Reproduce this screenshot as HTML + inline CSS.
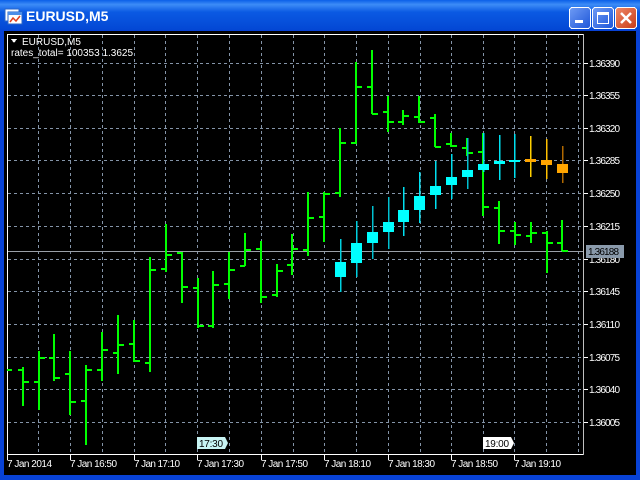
<!DOCTYPE html>
<html><head><meta charset="utf-8"><style>
html,body{margin:0;padding:0;width:640px;height:480px;overflow:hidden;background:#0842d6}
svg text{font-family:"Liberation Sans",sans-serif}
</style></head><body>
<svg width="640" height="480" xmlns="http://www.w3.org/2000/svg" shape-rendering="crispEdges">
<defs>
<linearGradient id="tb" x1="0" y1="0" x2="0" y2="1">
<stop offset="0" stop-color="#0a5fe8"/><stop offset="0.15" stop-color="#3d8cf7"/><stop offset="0.4" stop-color="#0b5ae3"/><stop offset="1" stop-color="#0347d4"/></linearGradient>
<linearGradient id="bb" x1="0" y1="0" x2="1" y2="1"><stop offset="0" stop-color="#6f9cf5"/><stop offset="1" stop-color="#1d55d8"/></linearGradient>
<linearGradient id="rb" x1="0" y1="0" x2="1" y2="1"><stop offset="0" stop-color="#f08a6a"/><stop offset="1" stop-color="#c83b16"/></linearGradient>
</defs>
<rect x="0" y="0" width="640" height="480" fill="#0842d6"/>
<rect x="0" y="0" width="640" height="30" fill="url(#tb)"/>
<rect x="5" y="9" width="14" height="12" fill="#fff" stroke="#2a66c8"/>
<rect x="8" y="12" width="14" height="12" fill="#fff" stroke="#2a66c8"/>
<rect x="8" y="12" width="14" height="3" fill="#4c8ee8"/>
<polyline points="10,22 13,18 16,21 20,16" fill="none" stroke="#e04020" stroke-width="1.5" shape-rendering="auto"/>
<text x="26" y="21" font-size="14" font-weight="bold" fill="#fff">EURUSD,M5</text>
<rect x="569.5" y="7.5" width="21" height="21" rx="3" fill="url(#bb)" stroke="#fff"/>
<rect x="575" y="20" width="8" height="3" fill="#fff"/>
<rect x="592.5" y="7.5" width="21" height="21" rx="3" fill="url(#bb)" stroke="#fff"/>
<rect x="597.5" y="12.5" width="11" height="11" fill="none" stroke="#fff"/><rect x="597" y="12" width="12" height="3" fill="#fff"/>
<rect x="615.5" y="7.5" width="21" height="21" rx="3" fill="url(#rb)" stroke="#fff"/>
<path d="M621 13 L631 23 M631 13 L621 23" stroke="#fff" stroke-width="2.5" shape-rendering="auto"/>
<rect x="4" y="31" width="632" height="444" fill="#000"/>
<g stroke="#8494a8" stroke-width="1" stroke-dasharray="3,3">
<line x1="8" x2="582" y1="63.5" y2="63.5"/><line x1="8" x2="582" y1="95.5" y2="95.5"/>
<line x1="8" x2="582" y1="128.5" y2="128.5"/><line x1="8" x2="582" y1="160.5" y2="160.5"/>
<line x1="8" x2="582" y1="193.5" y2="193.5"/><line x1="8" x2="582" y1="226.5" y2="226.5"/>
<line x1="8" x2="582" y1="259.5" y2="259.5"/><line x1="8" x2="582" y1="291.5" y2="291.5"/>
<line x1="8" x2="582" y1="324.5" y2="324.5"/><line x1="8" x2="582" y1="357.5" y2="357.5"/>
<line x1="8" x2="582" y1="389.5" y2="389.5"/><line x1="8" x2="582" y1="422.5" y2="422.5"/>
<line y1="35" y2="453" x1="38.5" x2="38.5"/><line y1="35" y2="453" x1="70.5" x2="70.5"/>
<line y1="35" y2="453" x1="102.5" x2="102.5"/><line y1="35" y2="453" x1="134.5" x2="134.5"/>
<line y1="35" y2="453" x1="165.5" x2="165.5"/><line y1="35" y2="453" x1="197.5" x2="197.5"/>
<line y1="35" y2="453" x1="229.5" x2="229.5"/><line y1="35" y2="453" x1="261.5" x2="261.5"/>
<line y1="35" y2="453" x1="293.5" x2="293.5"/><line y1="35" y2="453" x1="324.5" x2="324.5"/>
<line y1="35" y2="453" x1="356.5" x2="356.5"/><line y1="35" y2="453" x1="388.5" x2="388.5"/>
<line y1="35" y2="453" x1="420.5" x2="420.5"/><line y1="35" y2="453" x1="451.5" x2="451.5"/>
<line y1="35" y2="453" x1="483.5" x2="483.5"/><line y1="35" y2="453" x1="514.5" x2="514.5"/>
<line y1="35" y2="453" x1="546.5" x2="546.5"/><line y1="35" y2="453" x1="578.5" x2="578.5"/>
</g>
<rect x="7.5" y="34.5" width="576" height="420" fill="none" stroke="#fff"/>
<line x1="583.5" y1="34" x2="583.5" y2="455" stroke="#c0c0c0"/>
<line x1="8" x2="583" y1="251.5" y2="251.5" stroke="#9aa0a8"/>
<g id="bars" stroke="#00ff00" stroke-width="2"></g>
<g id="cand"></g>
<g fill="#fff" font-size="10">
<g stroke="#fff"><line x1="584" x2="588" y1="63.5" y2="63.5"/><line x1="584" x2="588" y1="95.5" y2="95.5"/><line x1="584" x2="588" y1="128.5" y2="128.5"/><line x1="584" x2="588" y1="160.5" y2="160.5"/><line x1="584" x2="588" y1="193.5" y2="193.5"/><line x1="584" x2="588" y1="226.5" y2="226.5"/><line x1="584" x2="588" y1="259.5" y2="259.5"/><line x1="584" x2="588" y1="291.5" y2="291.5"/><line x1="584" x2="588" y1="324.5" y2="324.5"/><line x1="584" x2="588" y1="357.5" y2="357.5"/><line x1="584" x2="588" y1="389.5" y2="389.5"/><line x1="584" x2="588" y1="422.5" y2="422.5"/></g>
<text x="589" y="67" textLength="31">1.36390</text><text x="589" y="99" textLength="31">1.36355</text><text x="589" y="132" textLength="31">1.36320</text><text x="589" y="164" textLength="31">1.36285</text><text x="589" y="197" textLength="31">1.36250</text><text x="589" y="230" textLength="31">1.36215</text><text x="589" y="263" textLength="31">1.36180</text><text x="589" y="295" textLength="31">1.36145</text><text x="589" y="328" textLength="31">1.36110</text><text x="589" y="361" textLength="31">1.36075</text><text x="589" y="393" textLength="31">1.36040</text><text x="589" y="426" textLength="31">1.36005</text>
</g>
<rect x="586" y="245" width="38" height="13" fill="#8a9aab"/>
<text x="588" y="255" font-size="10" fill="#000" textLength="31">1.36188</text>
<g stroke="#fff"><line x1="7.5" x2="7.5" y1="455" y2="460"/><line x1="70.5" x2="70.5" y1="455" y2="460"/><line x1="134.5" x2="134.5" y1="455" y2="460"/><line x1="197.5" x2="197.5" y1="455" y2="460"/><line x1="261.5" x2="261.5" y1="455" y2="460"/><line x1="324.5" x2="324.5" y1="455" y2="460"/><line x1="388.5" x2="388.5" y1="455" y2="460"/><line x1="451.5" x2="451.5" y1="455" y2="460"/><line x1="514.5" x2="514.5" y1="455" y2="460"/></g>
<g fill="#fff" font-size="10">
<text x="7" y="467" textLength="45">7 Jan 2014</text><text x="70" y="467" textLength="47">7 Jan 16:50</text><text x="134" y="467" textLength="46">7 Jan 17:10</text><text x="197" y="467" textLength="47">7 Jan 17:30</text><text x="261" y="467" textLength="47">7 Jan 17:50</text><text x="324" y="467" textLength="47">7 Jan 18:10</text><text x="388" y="467" textLength="47">7 Jan 18:30</text><text x="451" y="467" textLength="47">7 Jan 18:50</text><text x="514" y="467" textLength="47">7 Jan 19:10</text>
</g>
<path d="M197 437 H225 L228 443 L225 449 H197 Z" fill="#c8f4f4"/>
<text x="199" y="447" font-size="10" fill="#000" textLength="24">17:30</text>
<path d="M483 437 H511 L514 443 L511 449 H483 Z" fill="#fff"/>
<text x="485" y="447" font-size="10" fill="#000" textLength="24">19:00</text>
<path d="M11 39 L17 39 L14 43 Z" fill="#fff"/>
<text x="22" y="45" font-size="10" fill="#fff">EURUSD,M5</text>
<text x="11" y="56" font-size="10" fill="#fff">rates_total= 100353 1.3625</text>
</svg>
<script>
var bars=[[23,367,406,370,382],[39,351,410,382,358],[54,334,381,358,378],[70,351,415,374,402],[86,365,445,401,370],[102,332,381,370,350],[118,315,374,353,345],[134,320,362,344,361],[150,257,372,363,270],[166,224,272,269,255],[182,252,303,253,287],[198,278,328,288,326],[213,271,328,326,285],[229,252,299,284,270],[245,233,266,266,250],[261,241,303,249,297],[277,264,297,295,271],[292,234,275,265,249],[308,192,256,250,218],[324,192,242,217,194],[340,128,197,193,143],[356,62,144,143,87],[372,50,114,87,114],[388,96,132,112,122],[403,110,125,122,116],[419,96,123,117,122],[435,114,147,118,147],[451,133,147,144,146],[467,138,156,148,153],[483,133,216,152,207],[499,201,244,208,231],[515,222,245,231,235],[531,222,243,236,233],[547,231,273,233,243],[562,220,251,243,251]];
var s='<line x1="7" x2="12" y1="370" y2="370"/>';
bars.forEach(function(b){var x=b[0];s+='<line x1="'+x+'" x2="'+x+'" y1="'+b[1]+'" y2="'+b[2]+'"/><line x1="'+(x-5)+'" x2="'+x+'" y1="'+b[3]+'" y2="'+b[3]+'"/><line x1="'+x+'" x2="'+(x+6)+'" y1="'+b[4]+'" y2="'+b[4]+'"/>';});
document.getElementById('bars').innerHTML=s;
var c=[[340,239,292,262,277,'#00ffff','#00d0e0'],[356,221,277,243,263,'#00ffff','#00d0e0'],[372,206,259,232,243,'#00ffff','#00c0d0'],[388,197,249,222,232,'#00ffff','#00c0d0'],[403,187,236,210,222,'#00ffff','#00e0f0'],[419,172,223,196,210,'#00ffff','#00e0f0'],[435,161,209,186,195,'#00ffff','#00e0f0'],[451,154,199,177,185,'#00ffff','#00e0f0'],[467,138,189,170,177,'#00ffff','#00c0d0'],[483,133,172,164,170,'#00ffff','#00e0f0'],[499,135,180,161,164,'#00ffff','#00e0f0'],[514,134,178,160,162,'#00ffff','#00e0f0'],[530,136,177,159,162,'#ffa500','#ffd000'],[546,139,179,160,165,'#ffa500','#ffc000'],[562,146,183,164,173,'#ffa500','#b06800']];
var t='';c.forEach(function(a){t+='<rect x="'+a[0]+'" y="'+a[1]+'" width="1.5" height="'+(a[2]-a[1])+'" fill="'+a[6]+'"/><rect x="'+(a[0]-5)+'" y="'+a[3]+'" width="11" height="'+Math.max(2,a[4]-a[3])+'" fill="'+a[5]+'"/>';});
document.getElementById('cand').innerHTML=t;
</script>
</body></html>
